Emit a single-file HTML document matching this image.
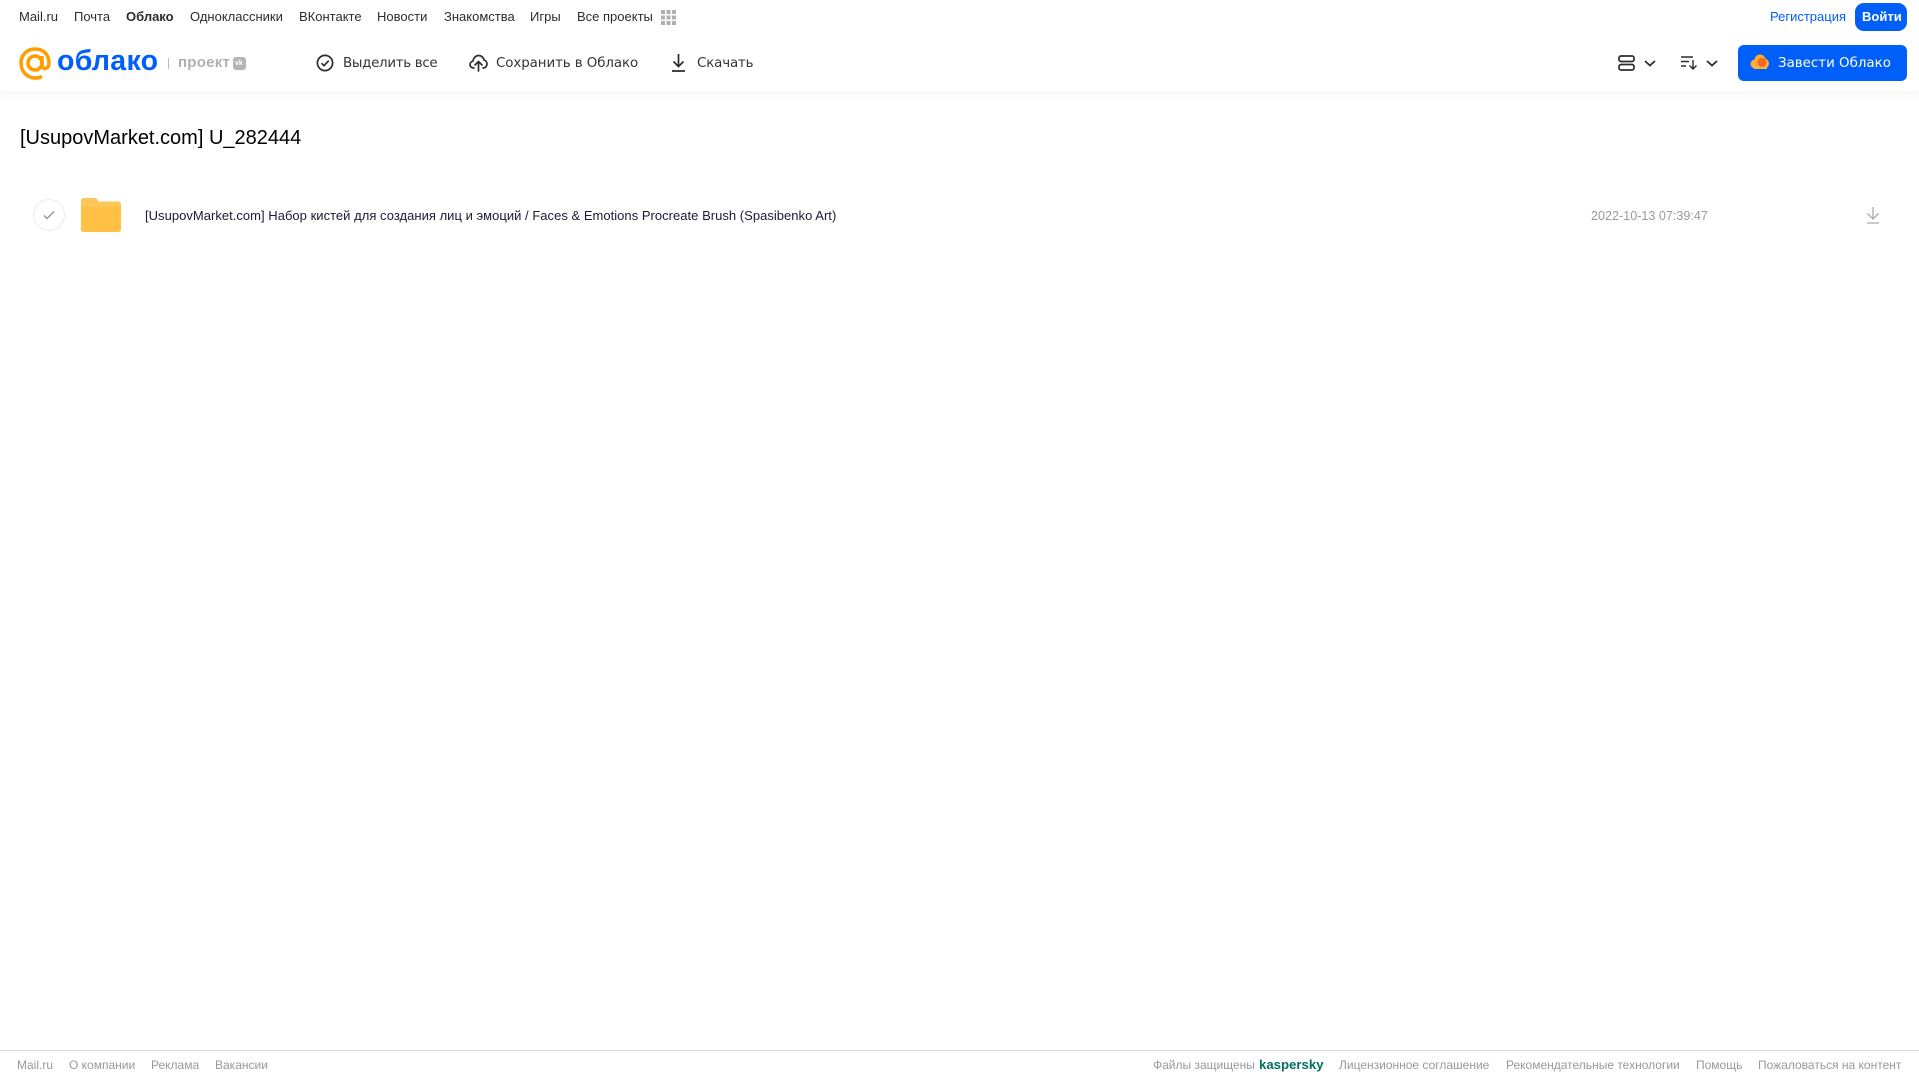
<!DOCTYPE html>
<html lang="ru"><head><meta charset="utf-8"><title>Облако</title>
<style>
html,body{margin:0;padding:0;background:#fff}
body{width:1919px;height:1079px;position:relative;overflow:hidden;font-family:"Liberation Sans",sans-serif}
.t{position:absolute;white-space:nowrap;line-height:20px}
.n{top:7px;font-size:13px;color:#2c2d2e}
.b{top:54px;color:#333;font-family:"DejaVu Sans",sans-serif;font-size:13.4px}
.f{top:1055px;font-size:12px;color:#999}
svg{position:absolute;overflow:visible}
#hd{position:absolute;left:0;top:0;width:1919px;height:91px;background:#fff;box-shadow:0 2px 10px rgba(0,0,0,.05)}
</style></head><body>
<div id="hd"></div>
<span class="t n" style="left:19px">Mail.ru</span>
<span class="t n" style="left:74px">Почта</span>
<span class="t n" style="left:126px;font-weight:bold">Облако</span>
<span class="t n" style="left:190px">Одноклассники</span>
<span class="t n" style="left:299px">ВКонтакте</span>
<span class="t n" style="left:377px">Новости</span>
<span class="t n" style="left:444px">Знакомства</span>
<span class="t n" style="left:530px">Игры</span>
<span class="t n" style="left:577px">Все проекты</span>
<svg style="left:661px;top:10px" width="15" height="15" fill="#b0b0b0"><rect x="0" y="0" width="4" height="4"/><rect x="5.500" y="0" width="4" height="4"/><rect x="11" y="0" width="4" height="4"/><rect x="0" y="5.500" width="4" height="4"/><rect x="5.500" y="5.500" width="4" height="4"/><rect x="11" y="5.500" width="4" height="4"/><rect x="0" y="11" width="4" height="4"/><rect x="5.500" y="11" width="4" height="4"/><rect x="11" y="11" width="4" height="4"/></svg>
<span class="t n" style="left:1770px;color:#005ff9">Регистрация</span>
<div style="position:absolute;left:1855px;top:3px;width:52px;height:28px;border-radius:9px;background:#005ff9"></div>
<span class="t n" style="left:1862px;color:#fff;font-weight:bold">Войти</span>

<svg style="left:18px;top:47px" width="34" height="33" viewBox="0 0 34 33" fill="none" stroke="#ff9e00" stroke-width="3.600"><circle cx="17" cy="16" r="7"/><path d="M24 9v9c0 5 7 5 7-2C31 7 25 2 17 2 9 2 3 8 3 16c0 9 7 15 14 15 3 0 5-.5 7-1.500"/></svg>
<span class="t" style="left:57px;top:46px;line-height:30px;font-size:28.500px;font-weight:bold;color:#005ff9;letter-spacing:.3px">облако</span>
<div style="position:absolute;left:168px;top:58px;width:1px;height:11px;background:#bbb"></div>
<span class="t" style="left:178px;top:53px;font-size:15px;font-weight:bold;color:#b0b0b0;letter-spacing:.25px">проект</span>
<div style="position:absolute;left:233px;top:57px;width:13px;height:13px;border-radius:3px;background:#b5b5b5"></div>
<span class="t" style="left:235px;top:58px;line-height:11px;font-size:7px;font-weight:bold;color:#fff">vk</span>

<svg style="left:316px;top:54px" width="18" height="18" fill="none" stroke="#2c2d2e" stroke-width="1.700"><circle cx="9" cy="9" r="7.600"/><path d="M5.500 9.200l2.500 2.500 4.700-5"/></svg>
<span class="t b" style="left:343px;letter-spacing:-.3px">Выделить все</span>
<svg style="left:469px;top:54px" width="19" height="18" fill="none" stroke="#2c2d2e" stroke-width="1.700" stroke-linecap="round" stroke-linejoin="round"><path d="M5 14H4.500C2.500 14 1 12.500 1 10.600c0-1.700 1.200-3.100 2.900-3.400C4.400 4 6.800 1.500 9.600 1.500c2.800 0 5 2 5.500 4.600 1.600.4 2.900 2 2.900 3.900 0 2.200-1.700 4-3.800 4H14"/><path d="M9.500 17V8M6 11l3.500-3.500L13 11"/></svg>
<span class="t b" style="left:496px;letter-spacing:-.08px">Сохранить в Облако</span>
<svg style="left:671px;top:54px" width="15" height="18" fill="none" stroke="#2c2d2e" stroke-width="1.700"><path d="M7.500 0v12M2.500 7.500l5 5 5-5M1 17h13"/></svg>
<span class="t b" style="left:697px;letter-spacing:-.15px">Скачать</span>

<svg style="left:1618px;top:55px" width="17" height="16" fill="none" stroke="#2c2d2e" stroke-width="1.700"><rect x="1" y="1" width="15" height="5.500" rx="2"/><rect x="1" y="9.500" width="15" height="5.500" rx="2"/></svg>
<svg style="left:1644px;top:60px" width="12" height="7" fill="none" stroke="#2c2d2e" stroke-width="1.800"><path d="M1 1l5 4.500L11 1"/></svg>
<svg style="left:1681px;top:56px" width="17" height="14" fill="none" stroke="#2c2d2e" stroke-width="1.400"><path d="M0 1h12M0 5.500h8M0 10h5M12 4v9M8.500 9.500l3.500 3.500 3.500-3.500"/></svg>
<svg style="left:1706px;top:60px" width="12" height="7" fill="none" stroke="#2c2d2e" stroke-width="1.800"><path d="M1 1l5 4.500L11 1"/></svg>
<div style="position:absolute;left:1738px;top:45px;width:169px;height:36px;border-radius:6px;background:#005ff9"></div>
<svg style="left:1750px;top:54px" width="20" height="16"><circle cx="5" cy="10" r="4.500" fill="#ffb03a"/><circle cx="10" cy="6" r="5.500" fill="#ffa930"/><circle cx="14" cy="9.500" r="5" fill="#ffb03a"/><rect x="4" y="9" width="13" height="6" fill="#ffb03a"/><circle cx="12" cy="8.500" r="4.500" fill="#f26a21"/></svg>
<span class="t b" style="left:1778px;color:#fff">Завести Облако</span>

<span class="t" style="left:20px;top:126px;line-height:24px;font-size:20px;color:#000">[UsupovMarket.com] U_282444</span>

<div style="position:absolute;left:33px;top:199px;width:30px;height:30px;border:1px solid #ececec;border-radius:50%"></div>
<svg style="left:43px;top:210px" width="12" height="10" fill="none" stroke="#999" stroke-width="1.500"><path d="M1 5.500l3 3L11 1.500"/></svg>
<svg style="left:81px;top:198px" width="40" height="34"><path d="M3 0h10c2 0 3 .8 4 2.500L18 3.500h19c1.700 0 3 1.300 3 3V31c0 1.700-1.300 3-3 3H3c-1.700 0-3-1.300-3-3V3C0 1.300 1.300 0 3 0z" fill="#ffc65a"/><path d="M0 9h40v22c0 1.700-1.300 3-3 3H3c-1.700 0-3-1.300-3-3z" fill="#ffc043"/></svg>
<span class="t" style="left:145px;top:206px;font-size:13px;color:#1f1a2e;letter-spacing:.025px">[UsupovMarket.com] Набор кистей для создания лиц и эмоций / Faces &amp; Emotions Procreate Brush (Spasibenko Art)</span>
<span class="t" style="left:1591px;top:206px;font-size:12.600px;color:#999">2022-10-13 07:39:47</span>
<svg style="left:1866px;top:207px" width="14" height="17" fill="none" stroke="#aaa" stroke-width="1.300"><path d="M7 0v12M1.500 6.500L7 12l5.500-5.500M1 16h12"/></svg>

<div style="position:absolute;left:0;top:1050px;width:1919px;height:1px;background:#d8d8d8"></div>
<span class="t f" style="left:17px">Mail.ru</span>
<span class="t f" style="left:69px">О компании</span>
<span class="t f" style="left:151px">Реклама</span>
<span class="t f" style="left:215px">Вакансии</span>
<span class="t f" style="left:1153px">Файлы защищены</span>
<span class="t f" style="left:1259px;color:#00705f;font-weight:bold;font-size:13.200px">kaspersky</span>
<span class="t f" style="left:1339px">Лицензионное соглашение</span>
<span class="t f" style="left:1506px">Рекомендательные технологии</span>
<span class="t f" style="left:1696px">Помощь</span>
<span class="t f" style="left:1758px">Пожаловаться на контент</span>
</body></html>
